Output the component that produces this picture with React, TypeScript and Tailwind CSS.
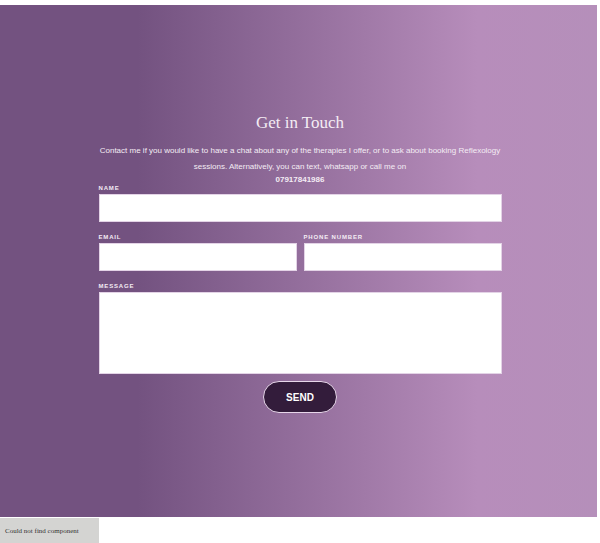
export default function App(): React.JSX.Element {
  return (
    <div className="h-[543px] w-[600px] overflow-hidden bg-white font-['Liberation_Sans',Arial,sans-serif]">
      <div className="h-[5px]" />
      {/* Contact section */}
      <section className="flex h-[512px] w-[597px] flex-col items-center bg-[linear-gradient(to_right,#735280_0%,#735280_23%,#b78dbb_80%,#b58fba_100%)] pl-[3px]">
        <h2 className="mt-[106px] font-['Liberation_Serif',serif] text-[17px] leading-[24px] text-[#f4ecf4]">
          Get in Touch
        </h2>
        <p className="mt-[8px] w-[410px] text-center text-[8px] leading-[16px] text-[#f4ecf4]">
          Contact me if you would like to have a chat about any of the therapies I offer, or to ask about booking Reflexology
          sessions. Alternatively, you can text, whatsapp or call me on
        </p>
        <p className="mt-[-1px] text-[8px] font-bold leading-[12px] text-[#f4ecf4]">07917841986</p>

        <form className="mt-[0px] flex w-[403px] flex-col">
          <Label text="Name" />
          <input className="h-[28px] w-full border border-[#e3d3e6] bg-white" />
          <div className="mt-[13px] grid grid-cols-2 gap-[7px]">
            <div className="flex flex-col">
              <Label text="Email" />
              <input className="h-[28px] w-full border border-[#e3d3e6] bg-white" />
            </div>
            <div className="flex flex-col">
              <Label text="Phone Number" />
              <input className="h-[28px] w-full border border-[#e3d3e6] bg-white" />
            </div>
          </div>
          <div className="mt-[13px] flex flex-col">
            <Label text="Message" />
            <textarea className="h-[82px] w-full resize-none border border-[#e3d3e6] bg-white" />
          </div>
          <div className="mt-[7px] flex justify-center">
            <button
              type="button"
              className="h-[32px] w-[74px] rounded-full border border-[#e7d6ea] bg-[#331c3b] text-[10px] font-bold text-white"
            >
              SEND
            </button>
          </div>
        </form>
      </section>
      <div className="mt-[1px] flex h-[26px] w-[99px] items-center bg-[#d4d4d2] px-[5px] font-['Liberation_Serif',serif] text-[7px] text-[#333]">
        Could not find component
      </div>
    </div>
  )
}

function Label({ text }: { text: string }): React.JSX.Element {
  return (
    <span className="mb-[3px] h-[5px] text-[6px] font-bold uppercase leading-[5px] tracking-[0.14em] text-[#f4ecf4]">
      {text}
    </span>
  )
}
